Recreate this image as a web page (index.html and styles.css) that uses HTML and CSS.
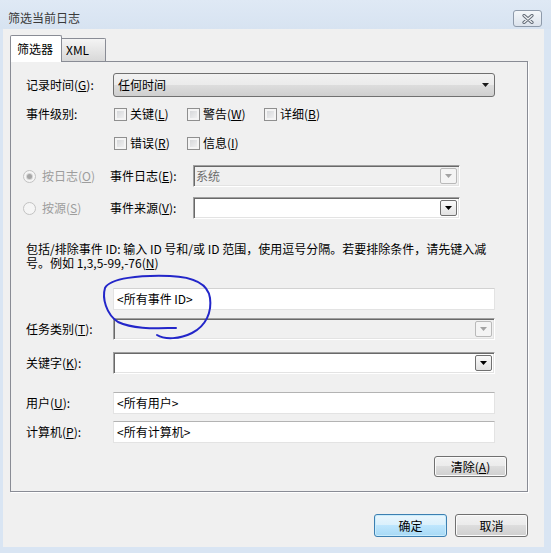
FILE: index.html
```html
<!DOCTYPE html>
<html>
<head>
<meta charset="utf-8">
<link rel="stylesheet" href="styles.css">
</head>
<body>
<div class="window">
  <div class="titlebar">
    <span class="title">筛选当前日志</span>
    <div class="close">
      <svg width="12" height="10" viewBox="0 0 12 10">
        <path d="M2 1.5L10 8.5M10 1.5L2 8.5" stroke="#5f6873" stroke-width="3.2" stroke-linecap="round"/>
        <path d="M2 1.5L10 8.5M10 1.5L2 8.5" stroke="#f1f3f6" stroke-width="1.3" stroke-linecap="round"/>
      </svg>
    </div>
  </div>
  <div class="client">
    <div class="tabs">
      <div class="tab active">筛选器</div>
      <div class="tab xml">XML</div>
    </div>
    <div class="panel">
      <div class="row h24">
        <span class="lbl">记录时间(<u>G</u>):</span>
        <div class="combo-theme">
          <span>任何时间</span>
          <svg class="arr" width="7" height="4" viewBox="0 0 7 4"><path d="M0 0H7L3.5 4Z" fill="#1a1a1a"/></svg>
        </div>
      </div>
      <div class="row h20 mt7">
        <span class="lbl">事件级别:</span>
        <div class="checks">
          <div class="chk"><span class="box"></span><span>关键(<u>L</u>)</span></div>
          <div class="chk"><span class="box"></span><span>警告(<u>W</u>)</span></div>
          <div class="chk"><span class="box"></span><span>详细(<u>B</u>)</span></div>
        </div>
      </div>
      <div class="row h20 mt9">
        <span class="lbl"></span>
        <div class="checks">
          <div class="chk"><span class="box"></span><span>错误(<u>R</u>)</span></div>
          <div class="chk"><span class="box"></span><span>信息(<u>I</u>)</span></div>
        </div>
      </div>
      <div class="row h22 mt12">
        <div class="radio-grp"><span class="radio on"></span><span>按日志(<u>O</u>)</span></div>
        <span class="lbl2">事件日志(<u>E</u>):</span>
        <div class="combo disabled w267">
          <span class="val">系统</span>
          <span class="ddbtn"><svg width="7" height="4" viewBox="0 0 7 4"><path d="M0 0H7L3.5 4Z" fill="#a3a3a3"/></svg></span>
        </div>
      </div>
      <div class="row h22 mt10">
        <div class="radio-grp"><span class="radio"></span><span>按源(<u>S</u>)</span></div>
        <span class="lbl2">事件来源(<u>V</u>):</span>
        <div class="combo w267">
          <span class="val"></span>
          <span class="ddbtn"><svg width="7" height="4" viewBox="0 0 7 4"><path d="M0 0H7L3.5 4Z" fill="#000"/></svg></span>
        </div>
      </div>
      <div class="desc">包括/排除事件 ID: 输入 ID 号和/或 ID 范围，使用逗号分隔。若要排除条件，请先键入减<br>号。例如 1,3,5-99,-76(<u>N</u>)</div>
      <div class="row h22 mt18">
        <span class="lbl"></span>
        <div class="tb tb-light">&lt;所有事件 ID&gt;</div>
      </div>
      <div class="row h22 mt8">
        <span class="lbl">任务类别(<u>T</u>):</span>
        <div class="combo disabled w382">
          <span class="val"></span>
          <span class="ddbtn"><svg width="7" height="4" viewBox="0 0 7 4"><path d="M0 0H7L3.5 4Z" fill="#a3a3a3"/></svg></span>
        </div>
      </div>
      <div class="row h22 mt12">
        <span class="lbl">关键字(<u>K</u>):</span>
        <div class="combo w382">
          <span class="val"></span>
          <span class="ddbtn"><svg width="7" height="4" viewBox="0 0 7 4"><path d="M0 0H7L3.5 4Z" fill="#000"/></svg></span>
        </div>
      </div>
      <div class="row h22 mt18">
        <span class="lbl">用户(<u>U</u>):</span>
        <div class="tb">&lt;所有用户&gt;</div>
      </div>
      <div class="row h22 mt7">
        <span class="lbl">计算机(<u>P</u>):</span>
        <div class="tb">&lt;所有计算机&gt;</div>
      </div>
      <div class="row-clear">
        <button class="btn small">清除(<u>A</u>)</button>
      </div>
    </div>
    <div class="footer">
      <button class="btn default">确定</button>
      <button class="btn">取消</button>
    </div>
  </div>
  <svg class="scribble" width="551" height="553" viewBox="0 0 551 553">
    <path d="M176 328 C160 328 135 330 118 322 C106 314 102 298 105 288 C110 278 140 275 170 276 C195 277 208 284 210 298 C212 312 206 326 192 333 C180 339 165 340 157 335" fill="none" stroke="#2326c9" stroke-width="2" stroke-linecap="round"/>
  </svg>
</div>
</body>
</html>
```

FILE: styles.css
```css
body {
  margin: 0;
  font-family: "Noto Sans CJK SC", "Microsoft YaHei", sans-serif;
  font-size: 12px;
  color: #000;
}

.window {
  position: relative;
  width: 551px;
  height: 553px;
  background: #d9e5f3;
  display: flex;
  flex-direction: column;
  box-sizing: border-box;
  overflow: hidden;
}

.titlebar {
  height: 29px;
  flex: none;
  display: flex;
  justify-content: space-between;
  align-items: flex-start;
  background: linear-gradient(#dfe9f5, #d7e3f1);
}

.title {
  margin: 11px 0 0 8px;
  line-height: 14px;
  color: #3a3a3a;
}

.close {
  margin: 10px 9px 0 0;
  width: 29px;
  height: 17px;
  box-sizing: border-box;
  border: 1px solid #8e9aaa;
  border-radius: 3px;
  background: linear-gradient(#f4f7fa, #dce3ec);
  display: flex;
  align-items: center;
  justify-content: center;
}

.client {
  margin: 0 7px 0 3px;
  height: 518px;
  background: #f0f0f0;
  box-sizing: border-box;
  padding: 6px 16px 0 7px;
}

.tabs {
  display: flex;
  align-items: flex-end;
  height: 26px;
}

.tab {
  box-sizing: border-box;
  border: 1px solid #898c95;
  border-bottom: none;
  white-space: nowrap;
}

.tab.active {
  width: 52px;
  height: 27px;
  margin-bottom: -1px;
  background: #fff;
  padding-left: 6px;
  line-height: 26px;
  position: relative;
  z-index: 1;
  border-radius: 2px 2px 0 0;
}

.tab.xml {
  width: 45px;
  height: 23px;
  margin-left: -1px;
  background: linear-gradient(#f4f4f4, #d8d8d8);
  padding-left: 4px;
  line-height: 22px;
  border-radius: 0 2px 0 0;
}

.panel {
  box-sizing: border-box;
  width: 518px;
  height: 431px;
  border: 1px solid #898c95;
  padding: 11px 0 0 15px;
  box-shadow: 1px 1px 0 #fff;
  background: #f0f0f0;
}

.row {
  display: flex;
  align-items: center;
}

.h24 { height: 24px; }
.h22 { height: 22px; }
.h20 { height: 20px; }
.mt7 { margin-top: 7px; }
.mt8 { margin-top: 8px; }
.mt9 { margin-top: 9px; }
.mt10 { margin-top: 10px; }
.mt12 { margin-top: 12px; }
.mt18 { margin-top: 18px; }

.lbl {
  width: 87px;
  flex: none;
  line-height: 14px;
  white-space: nowrap;
}

.lbl2 {
  width: 83px;
  flex: none;
  line-height: 14px;
  white-space: nowrap;
}

.combo-theme {
  width: 382px;
  height: 24px;
  box-sizing: border-box;
  border: 1px solid #707070;
  border-radius: 3px;
  background: linear-gradient(#f2f2f2 0%, #ebebeb 50%, #dddddd 50%, #cfcfcf 100%);
  display: flex;
  align-items: center;
  justify-content: space-between;
  padding: 0 5px 0 4px;
  line-height: 14px;
}

.checks {
  display: grid;
  grid-template-columns: 73px 77px auto;
  align-items: center;
}

.chk {
  display: flex;
  align-items: center;
  gap: 3px;
  line-height: 14px;
  white-space: nowrap;
}

.box {
  width: 13px;
  height: 13px;
  margin-left: 1px;
  box-sizing: border-box;
  border: 1px solid #8f8f8f;
  background: linear-gradient(135deg, #cfd1d4, #f6f6f6);
  box-shadow: inset 0 0 0 2px #f4f4f4;
}

.radio-grp {
  width: 87px;
  flex: none;
  margin-left: -3px;
  display: flex;
  align-items: center;
  gap: 6px;
  color: #9d9d9d;
  line-height: 14px;
  white-space: nowrap;
}

.radio {
  width: 13px;
  height: 13px;
  flex: none;
  border-radius: 50%;
  border: 1px solid #c2c2c2;
  box-sizing: border-box;
  background: #f5f5f5;
  display: flex;
  align-items: center;
  justify-content: center;
}

.radio.on::after {
  content: "";
  width: 5px;
  height: 5px;
  border-radius: 50%;
  background: #a6a6a6;
  box-shadow: 0 0 0 1px #d6d6d6;
}

.combo {
  box-sizing: border-box;
  height: 22px;
  border: 1px solid;
  border-color: #a0a0a0 #ffffff #ffffff #a0a0a0;
  box-shadow: inset 1px 1px 0 #696969, inset -1px -1px 0 #e3e3e3;
  padding: 2px;
  display: flex;
  align-items: center;
  justify-content: space-between;
  background: #fff;
  line-height: 14px;
}

.combo.disabled {
  background: #f0f0f0;
}

.combo .val {
  color: #6d6d6d;
  padding-left: 0;
}

.w267 { width: 267px; }
.w382 { width: 382px; }

.ddbtn {
  width: 17px;
  height: 16px;
  flex: none;
  box-sizing: border-box;
  border: 1px solid #707070;
  border-radius: 2px;
  background: linear-gradient(#fafafa, #e2e2e2);
  display: flex;
  align-items: center;
  justify-content: center;
}

.combo.disabled .ddbtn {
  border-color: #b9b9b9;
  background: #f4f4f4;
}

.desc {
  margin-top: 23px;
  line-height: 14px;
  white-space: nowrap;
}

.tb {
  width: 382px;
  height: 22px;
  box-sizing: border-box;
  border: 1px solid #e3e3e3;
  border-top-color: #b3b3b3;
  background: #fff;
  padding-left: 3px;
  display: flex;
  align-items: center;
  line-height: 14px;
  white-space: nowrap;
}

.tb.tb-light {
  border-top-color: #d2d2d2;
}

.row-clear {
  margin-top: 13px;
  display: flex;
  justify-content: flex-end;
  padding-right: 20px;
}

.btn {
  width: 73px;
  height: 23px;
  box-sizing: border-box;
  border: 1px solid #707070;
  border-radius: 3px;
  background: linear-gradient(#f2f2f2 0%, #ebebeb 49%, #dddddd 50%, #cfcfcf 100%);
  box-shadow: inset 0 0 0 1px #fbfbfb;
  font-family: inherit;
  font-size: 12px;
  color: #000;
  padding: 0;
  line-height: 14px;
}

.btn.small {
  height: 21px;
}

.btn.default {
  border-color: #3c7fb1;
  background: linear-gradient(#eaf6fd 0%, #d9f0fc 49%, #bee6fd 50%, #a7d9f5 100%);
  box-shadow: inset 0 0 0 1px #c9ecfc;
}

.footer {
  margin-top: 22px;
  display: flex;
  justify-content: flex-end;
  gap: 8px;
}

.scribble {
  position: absolute;
  left: 0;
  top: 0;
  pointer-events: none;
}
```
